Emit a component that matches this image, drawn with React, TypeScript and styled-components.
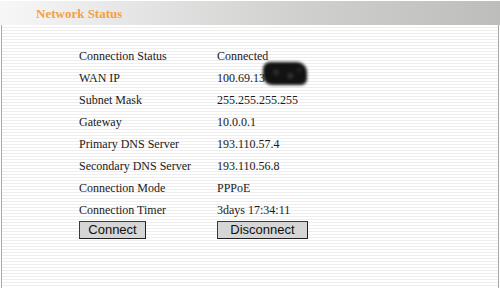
import styled, { createGlobalStyle } from 'styled-components';

const rows: [string, string][] = [
  ['Connection Status', 'Connected'],
  ['WAN IP', '100.69.13'],
  ['Subnet Mask', '255.255.255.255'],
  ['Gateway', '10.0.0.1'],
  ['Primary DNS Server', '193.110.57.4'],
  ['Secondary DNS Server', '193.110.56.8'],
  ['Connection Mode', 'PPPoE'],
  ['Connection Timer', '3days 17:34:11'],
];

export default function App(): JSX.Element {
  return (
    <Page>
      <GlobalStyle />
      <Header>
        <Title>Network Status</Title>
      </Header>
      <Panel>
        <StatusGrid>
          {rows.map(([label, value]) => (
            <Row key={label}>
              <Label>{label}</Label>
              <Value>
                {value}
                {label === 'WAN IP' && <Smudge />}
              </Value>
            </Row>
          ))}
          <ButtonRow>
            <div>
              <Button $width={67}>Connect</Button>
            </div>
            <div>
              <Button $width={91}>Disconnect</Button>
            </div>
          </ButtonRow>
        </StatusGrid>
      </Panel>
    </Page>
  );
}

const GlobalStyle = createGlobalStyle`
  html, body {
    margin: 0;
    padding: 0;
    background: #fff;
  }
`;

const Page = styled.div`
  width: 500px;
  height: 288px;
  overflow: hidden;
  display: flex;
  flex-direction: column;
  font-family: 'Liberation Serif', 'Times New Roman', serif;
`;

const Header = styled.div`
  height: 24px;
  margin-top: 1px;
  display: flex;
  align-items: center;
  padding-left: 36px;
  background: linear-gradient(to right, #f7f7f7 0%, #e3e3e3 30%, #d0d0ce 60%, #bdbdbb 100%);
`;

const Title = styled.div`
  color: #f7a040;
  font-weight: bold;
  font-size: 13px;
  padding-top: 1px;
`;

const Panel = styled.div`
  flex: 1;
  border-left: 1px solid #a8a8a8;
  border-right: 1px solid #a8a8a8;
  margin: 0 1px;
  padding: 20px 0 0 77px;
  background: repeating-linear-gradient(
    to bottom,
    #ffffff 0px,
    #ffffff 2px,
    #eeeeee 2px,
    #eeeeee 3px
  );
`;

const StatusGrid = styled.div`
  display: flex;
  flex-direction: column;
`;

const Row = styled.div`
  display: grid;
  grid-template-columns: 138px auto;
  height: 22px;
  align-items: center;
  font-size: 12px;
  color: #1a1a1a;
`;

const ButtonRow = styled(Row)`
  height: 18px;
  align-items: start;
`;

const Label = styled.div``;

const Value = styled.div`
  position: relative;
`;

const Smudge = styled.span`
  position: absolute;
  left: 46px;
  top: -9px;
  width: 44px;
  height: 23px;
  border-radius: 7px 10px 6px 9px;
  background:
    radial-gradient(circle at 30% 45%, #2c2c2c 0 2px, transparent 4px),
    radial-gradient(circle at 62% 60%, #303030 0 2px, transparent 4px),
    radial-gradient(circle at 82% 35%, #2a2a2a 0 1px, transparent 3px),
    #121212;
  filter: blur(1.4px);
`;

const Button = styled.button<{ $width: number }>`
  width: ${(p) => p.$width}px;
  height: 18px;
  padding: 0;
  background: #d6d6d6;
  border: 1px solid #3a3a3a;
  border-right-color: #202020;
  border-bottom-color: #202020;
  font-family: 'Liberation Sans', Arial, sans-serif;
  font-size: 13px;
  color: #111;
  line-height: 16px;
`;
